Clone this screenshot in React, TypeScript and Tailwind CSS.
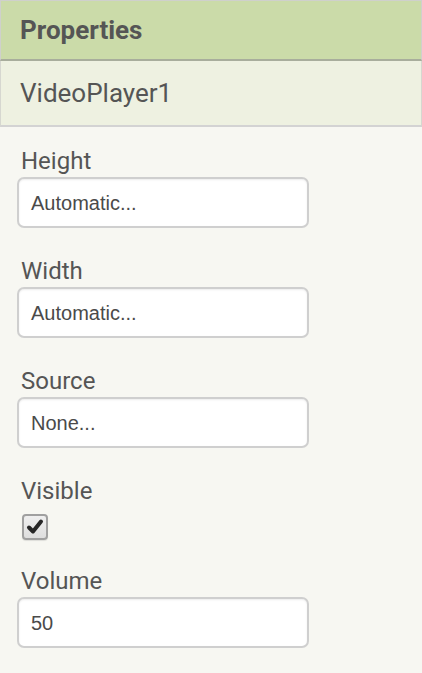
import React from "react";

const props = [
  { name: "Height", value: "Automatic..." },
  { name: "Width", value: "Automatic..." },
  { name: "Source", value: "None..." },
];

function TextBox({ value }: { value: string }) {
  return (
    <div className="mt-[3px] w-[292px] h-[51px] rounded-[7px] border-2 border-[#cfcfcf] bg-white shadow-[inset_0_1px_2px_rgba(0,0,0,0.08)] flex items-center pl-[12px] font-['Liberation_Sans',Arial,sans-serif] text-[20px] text-[#4a4a4a]">
      {value}
    </div>
  );
}

function Label({ children }: { children: React.ReactNode }) {
  return <div className="h-[26px] leading-[26px] text-[24px] text-[#555] pl-[4px]">{children}</div>;
}

export default function App() {
  return (
    <div className="w-[422px] h-[673px] bg-[#f7f7f2] font-['Roboto',sans-serif] overflow-hidden">
      <div className="h-[61px] bg-[#cbdba9] border-t border-x border-[#cfd0cc] border-b-2 border-b-[#a8ad9c] flex items-center pl-[19px] text-[26px] font-bold text-[#555]">
        Properties
      </div>
      <div className="h-[66px] bg-[#eef1e1] border-x border-[#d6d7d0] border-b-2 border-b-[#d3d3d3] flex items-center pl-[19px] text-[26px] text-[#555]">
        VideoPlayer1
      </div>
      <div className="pt-[21px] px-[17px]">
        {props.map((p) => (
          <div key={p.name} className="mb-[30px]">
            <Label>{p.name}</Label>
            <TextBox value={p.value} />
          </div>
        ))}
        <div className="mb-[28px]">
          <Label>Visible</Label>
          <div className="pt-[10px] pl-[5px]">
            <div className="w-[26px] h-[26px] rounded-[4px] border-2 border-[#a0a0a0] bg-gradient-to-b from-[#efefef] to-[#dedede] shadow-[0_1px_1px_rgba(0,0,0,0.1)] flex items-center justify-center">
              <svg viewBox="0 0 20 20" className="w-[20px] h-[20px]">
                <path d="M4 10.5 L8 14.5 L16 4.5" fill="none" stroke="#262626" strokeWidth="4" strokeLinecap="round" strokeLinejoin="round" />
              </svg>
            </div>
          </div>
        </div>
        <div>
          <Label>Volume</Label>
          <TextBox value="50" />
        </div>
      </div>
    </div>
  );
}
